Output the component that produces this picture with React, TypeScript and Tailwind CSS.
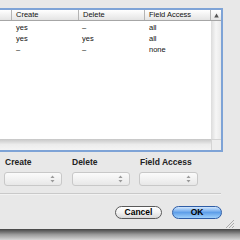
const rows = [
  { create: 'yes', del: '–', access: 'all' },
  { create: 'yes', del: 'yes', access: 'all' },
  { create: '–', del: '–', access: 'none' },
]

function Popup({ width }: { width: string }) {
  return (
    <div
      className={`${width} h-[14px] rounded-[3px] border border-[#c8c8c8] bg-gradient-to-b from-[#fbfbfb] to-[#e8e8e8] flex items-center justify-end pr-[6px]`}
    >
      <svg width="5" height="8" viewBox="0 0 5 8">
        <path d="M2.5 0.5 L4.5 3 L0.5 3 Z" fill="#9a9a9a" />
        <path d="M2.5 7.5 L4.5 5 L0.5 5 Z" fill="#9a9a9a" />
      </svg>
    </div>
  )
}

export default function App() {
  return (
    <div className="w-[240px] h-[240px] overflow-hidden flex flex-col font-['Liberation_Sans',Arial,sans-serif] text-black">
      <div className="relative h-[229px] bg-[#e8e8e8] flex flex-col">
        {/* table with focus ring */}
        <div className="mt-[8px] -ml-[3px] w-[226px] h-[144px] border-2 border-[#7ea3d6] flex flex-col">
          {/* header */}
          <div className="flex h-[11px] bg-gradient-to-b from-white to-[#e4e4e4] border-b border-[#a6a6a6] text-[7.5px] leading-[10px] text-[#111]">
            <div className="w-[13px] border-r border-[#b4b4b4]" />
            <div className="w-[67px] border-r border-[#b4b4b4] pl-[4px]">Create</div>
            <div className="w-[66px] border-r border-[#b4b4b4] pl-[4px]">Delete</div>
            <div className="w-[66px] border-r border-[#b4b4b4] pl-[4px]">Field Access</div>
            <div className="w-[10px] flex items-center justify-center">
              <svg width="5" height="5" viewBox="0 0 5 5">
                <path d="M2.5 0.5 L4.8 4.5 L0.2 4.5 Z" fill="#555" />
              </svg>
            </div>
          </div>
          {/* body */}
          <div className="flex h-[118px]">
            <div className="w-[212px] bg-white pt-[1px]">
              {rows.map((r, i) => (
                <div key={i} className="flex h-[11px] items-center text-[7.5px] text-[#111]">
                  <div className="w-[13px]" />
                  <div className="w-[67px] pl-[4px]">{r.create}</div>
                  <div className="w-[66px] pl-[3px]">{r.del}</div>
                  <div className="w-[66px] pl-[4px]">{r.access}</div>
                </div>
              ))}
            </div>
            <div className="w-[10px] bg-gradient-to-r from-[#dcdcdc] via-[#f6f6f6] to-[#e9e9e9]" />
          </div>
          {/* horizontal scroll row */}
          <div className="flex h-[11px]">
            <div className="w-[212px] bg-gradient-to-b from-[#c6c6c6] via-[#ececec] to-[#f4f4f4]" />
            <div className="w-[10px] bg-[#ededed] border-t border-l border-[#d4d4d4]" />
          </div>
        </div>

        {/* popups */}
        <div className="mt-[5px] flex pl-[4px] text-[8.5px] font-bold leading-[10px] text-[#222]">
          <div className="w-[68px] flex flex-col">
            <span className="pl-[1px]">Create</span>
            <div className="mt-[5px]">
              <Popup width="w-[58px]" />
            </div>
          </div>
          <div className="w-[67px] flex flex-col">
            <span>Delete</span>
            <div className="mt-[5px]">
              <Popup width="w-[58px]" />
            </div>
          </div>
          <div className="w-[60px] flex flex-col">
            <span className="pl-[1px]">Field Access</span>
            <div className="mt-[5px]">
              <Popup width="w-[59px]" />
            </div>
          </div>
        </div>

        <div className="mt-[7px] w-[221px] h-[2px] border-t border-[#c9c9c9] bg-[#f2f2f2]" />

        {/* buttons */}
        <div className="mt-[11px] flex justify-end gap-[10px] pr-[18px] text-[8.5px] font-bold">
          <button className="w-[47px] h-[13px] rounded-full border border-[#5a5a5a] bg-gradient-to-b from-white via-[#f2f2f2] to-[#d8d8d8] leading-[11px]">
            Cancel
          </button>
          <button className="w-[50px] h-[13px] rounded-full border border-[#2f5da6] bg-gradient-to-b from-[#d2e7fd] via-[#5f9fe9] to-[#9fd0fb] leading-[11px]">
            OK
          </button>
        </div>

        {/* resize grip */}
        <svg className="absolute right-[6px] bottom-[1px]" width="9" height="9" viewBox="0 0 9 9">
          <path d="M1 9 L9 1 M4 9 L9 4 M7 9 L9 7" stroke="#9b9b9b" strokeWidth="0.8" />
        </svg>
      </div>
      <div className="h-[11px] bg-gradient-to-b from-[#454545] via-[#9a9a9a] to-[#d6d6d6]" />
    </div>
  )
}
